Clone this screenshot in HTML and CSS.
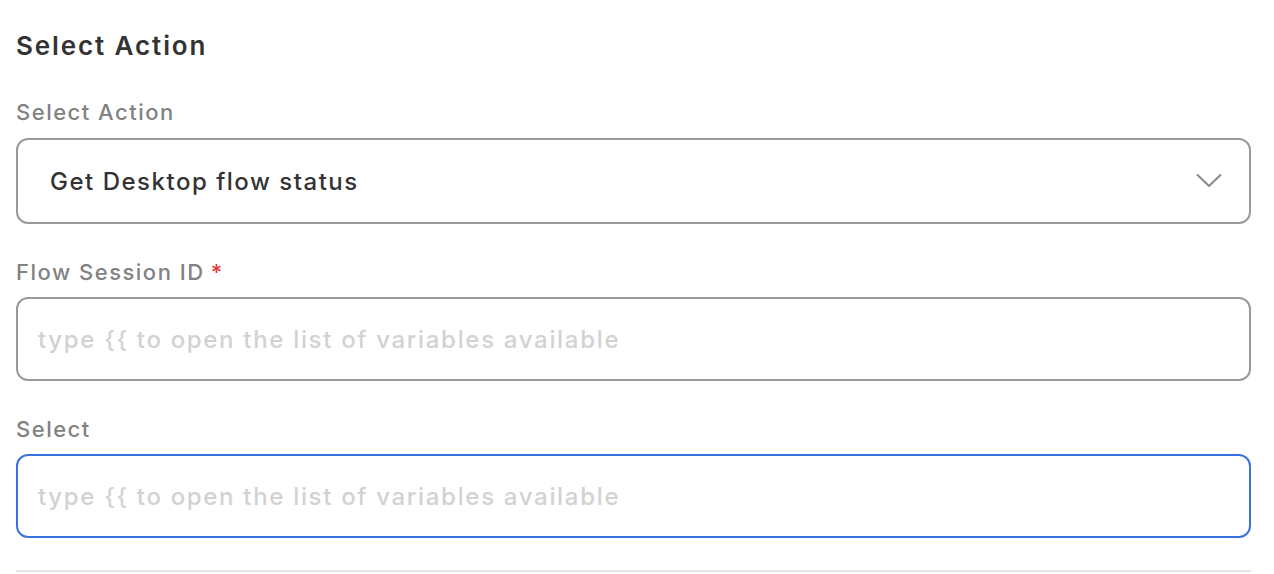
FILE: index.html
```html
<!DOCTYPE html>
<html>
<head>
<meta charset="utf-8">
<link rel="stylesheet" href="styles.css">
</head>
<body>
<div class="panel">
  <h2 class="title">Select Action</h2>

  <div class="field field-first">
    <label class="label">Select Action</label>
    <div class="select">
      <span class="select-value">Get Desktop flow status</span>
      <svg class="chevron" width="26" height="16" viewBox="0 0 26 16"><path d="M1.5 2 L13 13 L24.5 2" fill="none" stroke="#8a8a8a" stroke-width="2" stroke-linecap="round" stroke-linejoin="round"/></svg>
    </div>
  </div>

  <div class="field">
    <label class="label">Flow Session ID<span class="req">*</span></label>
    <div class="input"><span class="placeholder">type {{ to open the list of variables available</span></div>
  </div>

  <div class="field">
    <label class="label">Select</label>
    <div class="input input-focus"><span class="placeholder">type {{ to open the list of variables available</span></div>
  </div>

  <div class="divider"></div>
</div>
</body>
</html>
```

FILE: styles.css
```css
* { box-sizing: border-box; }
html, body { margin: 0; padding: 0; background: #ffffff; }
body {
  font-family: "Inter", "Open Sans", sans-serif;
  width: 1274px;
  height: 574px;
  overflow: hidden;
}
.panel {
  padding: 28px 23px 0 16px;
}
.title {
  margin: 0;
  height: 36px;
  line-height: 36px;
  font-size: 26px;
  font-weight: 600;
  letter-spacing: 0.073em;
  color: #333333;
}
.field { margin-top: 33px; }
.field-first { margin-top: 33px; }
.label {
  display: block;
  height: 30px;
  line-height: 30px;
  font-size: 22px;
  font-weight: 500;
  letter-spacing: 0.068em;
  color: #828282;
  margin-bottom: 10px;
}
.field-first .label { margin-bottom: 11px; }
.req { color: #e53935; margin-left: 6px; }
.select {
  height: 86px;
  border: 2px solid #9a9a9a;
  border-radius: 12px;
  display: flex;
  align-items: center;
  justify-content: space-between;
  padding: 0 27px 0 32px;
}
.select-value {
  font-size: 24px;
  font-weight: 500;
  letter-spacing: 0.063em;
  color: #333333;
}
.chevron { display: block; }
.input {
  height: 84px;
  border: 2px solid #9a9a9a;
  border-radius: 12px;
  display: flex;
  align-items: center;
  padding: 0 20px;
}
.input-focus { border-color: #3a73e0; }
.placeholder {
  font-size: 24px;
  font-weight: 500;
  letter-spacing: 0.07em;
  color: #d2d2d2;
}
.divider {
  margin-top: 32px;
  height: 2px;
  background: #e6e6e6;
}
```
